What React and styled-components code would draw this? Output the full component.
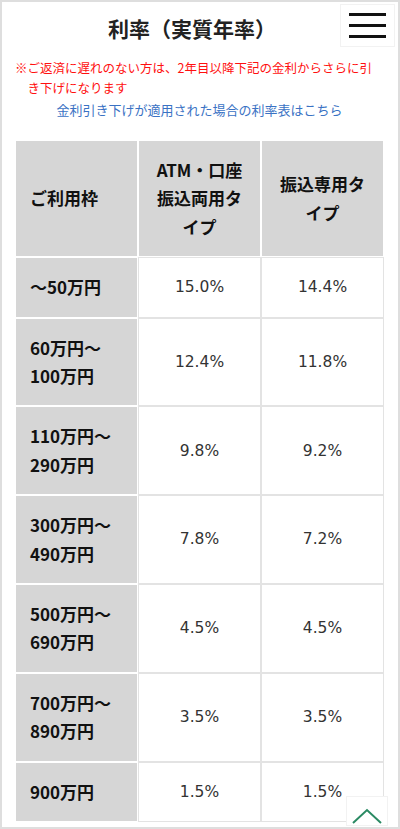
import React from "react";
import styled, { createGlobalStyle } from "styled-components";

const GlobalStyle = createGlobalStyle`
  html, body {
    margin: 0;
    padding: 0;
    background: #fff;
  }
  body {
    font-family: "Noto Sans CJK JP", "Noto Sans", sans-serif;
  }
`;

const Frame = styled.div`
  box-sizing: border-box;
  width: 400px;
  height: 829px;
  border: 2px solid #dedede;
  padding: 0 14px 0 13px;
  overflow: hidden;
  position: relative;
`;

const TitleBar = styled.h1`
  margin: 0;
  height: 52px;
  line-height: 52px;
  font-size: 21px;
  font-weight: 700;
  color: #222;
  text-align: center;
  padding-right: 15px;
`;

const MenuButton = styled.button`
  position: absolute;
  top: 2px;
  right: 3px;
  width: 55px;
  height: 43px;
  background: #fff;
  border: 1px solid #f2f2f2;
  padding: 0;
  display: flex;
  flex-direction: column;
  justify-content: center;
  align-items: center;
  gap: 8px;
  cursor: pointer;
`;

const MenuLine = styled.span`
  display: block;
  width: 37px;
  height: 3px;
  background: #111;
`;

const Note = styled.p`
  margin: 4px 0 0;
  font-size: 12.5px;
  line-height: 20px;
  color: #ff1010;
  padding-left: 1em;
  text-indent: -1em;
`;

const RateLink = styled.a`
  display: block;
  margin-top: 2px;
  font-size: 13px;
  line-height: 20px;
  color: #3a72c4;
  text-align: center;
  text-decoration: none;
`;

const Table = styled.table`
  margin-top: 20px;
  width: 100%;
  border-collapse: separate;
  border-spacing: 0;
  table-layout: fixed;
`;

const HeadCell = styled.th`
  background: #d6d6d6;
  border: 1px solid #fff;
  padding: 15px 14px;
  font-size: 17px;
  line-height: 28.4px;
  font-weight: 700;
  color: #111;
  text-align: ${(p) => (p.$left ? "left" : "center")};
`;

const ValueCell = styled.td`
  background: #fff;
  border: 1px solid #e3e3e3;
  padding: 15px 14px;
  font-family: "DejaVu Sans", Verdana, sans-serif;
  font-size: 15.5px;
  line-height: 28.4px;
  color: #333;
  text-align: center;
`;

const ScrollTop = styled.button`
  position: absolute;
  right: 10px;
  bottom: 1px;
  width: 42px;
  height: 30px;
  background: #fff;
  border: 1px solid #f2f2f2;
  padding: 0;
  display: flex;
  align-items: flex-end;
  justify-content: center;
  cursor: pointer;
`;

const ROWS = [
  { range: ["～50万円"], a: "15.0%", b: "14.4%" },
  { range: ["60万円～", "100万円"], a: "12.4%", b: "11.8%" },
  { range: ["110万円～", "290万円"], a: "9.8%", b: "9.2%" },
  { range: ["300万円～", "490万円"], a: "7.8%", b: "7.2%" },
  { range: ["500万円～", "690万円"], a: "4.5%", b: "4.5%" },
  { range: ["700万円～", "890万円"], a: "3.5%", b: "3.5%" },
  { range: ["900万円"], a: "1.5%", b: "1.5%" },
];

export default function App() {
  return (
    <>
      <GlobalStyle />
      <Frame>
        <TitleBar>利率（実質年率）</TitleBar>
        <MenuButton aria-label="menu">
          <MenuLine />
          <MenuLine />
          <MenuLine />
        </MenuButton>
        <Note>※ご返済に遅れのない方は、2年目以降下記の金利からさらに引き下げになります</Note>
        <RateLink href="#">金利引き下げが適用された場合の利率表はこちら</RateLink>
        <Table>
          <thead>
            <tr>
              <HeadCell $left>ご利用枠</HeadCell>
              <HeadCell>ATM・口座振込両用タイプ</HeadCell>
              <HeadCell>振込専用タイプ</HeadCell>
            </tr>
          </thead>
          <tbody>
            {ROWS.map((row, i) => (
              <tr key={i}>
                <HeadCell $left>
                  {row.range.map((line, j) => (
                    <React.Fragment key={j}>
                      {j > 0 && <br />}
                      {line}
                    </React.Fragment>
                  ))}
                </HeadCell>
                <ValueCell>{row.a}</ValueCell>
                <ValueCell>{row.b}</ValueCell>
              </tr>
            ))}
          </tbody>
        </Table>
        <ScrollTop aria-label="page top">
          <svg width="30" height="18" viewBox="0 0 30 18">
            <polyline points="1,16 15,3 29,16" fill="none" stroke="#2a8a63" strokeWidth="2" />
          </svg>
        </ScrollTop>
      </Frame>
    </>
  );
}
